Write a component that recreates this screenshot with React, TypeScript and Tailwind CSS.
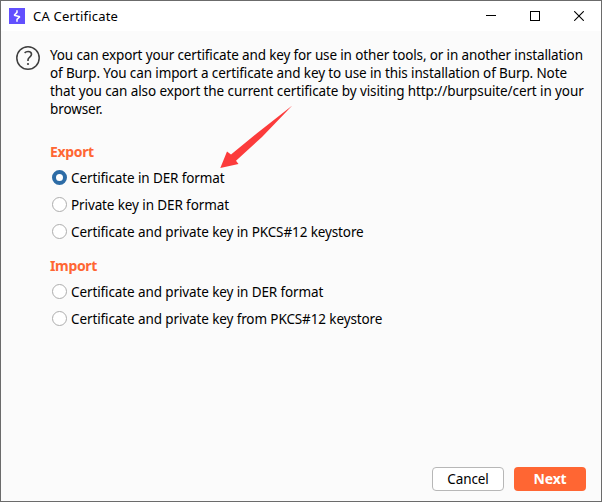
import { useState } from "react";

const description = [
  { text: "You can export your certificate and key for use in other tools, or in another installation", spacing: "tracking-[-0.14px]" },
  { text: "of Burp. You can import a certificate and key to use in this installation of Burp. Note", spacing: "tracking-[-0.12px]" },
  { text: "that you can also export the current certificate by visiting http://burpsuite/cert in your", spacing: "tracking-[-0.1px]" },
  { text: "browser.", spacing: "tracking-[-0.1px]" },
];

const groups = [
  {
    title: "Export",
    options: [
      { id: "export-der-cert", label: "Certificate in DER format" },
      { id: "export-der-key", label: "Private key in DER format" },
      { id: "export-pkcs12", label: "Certificate and private key in PKCS#12 keystore" },
    ],
  },
  {
    title: "Import",
    options: [
      { id: "import-der", label: "Certificate and private key in DER format" },
      { id: "import-pkcs12", label: "Certificate and private key from PKCS#12 keystore" },
    ],
  },
];

function BurpLogo() {
  return (
    <svg width="16" height="16" viewBox="0 0 16 16" className="shrink-0">
      <rect width="16" height="16" fill="#6250fe" />
      <path d="M8 2.2V4.4L5.2 7.2L10.8 8.7L8 11.4V13.7" fill="none" stroke="#fff" strokeWidth="1.5" strokeLinejoin="bevel" />
    </svg>
  );
}

function TitleBar() {
  return (
    <header className="flex h-[30px] shrink-0 items-center bg-white pl-2">
      <BurpLogo />
      <h1 className="ml-2 flex-1 text-[13px] leading-[18px] tracking-[0.2px]">CA Certificate</h1>
      <button aria-label="Minimize" className="flex h-full w-11 items-center justify-center">
        <svg width="10" height="10" viewBox="0 0 10 10" shapeRendering="crispEdges">
          <path d="M0 4.5H10" stroke="#000" />
        </svg>
      </button>
      <button aria-label="Maximize" className="flex h-full w-11 items-center justify-center">
        <svg width="10" height="10" viewBox="0 0 10 10" shapeRendering="crispEdges">
          <rect x="0.5" y="0.5" width="9" height="9" fill="none" stroke="#000" />
        </svg>
      </button>
      <button aria-label="Close" className="flex h-full w-11 items-center justify-center">
        <svg width="10" height="10" viewBox="0 0 10 10">
          <path d="M0.2 0.2L9.8 9.8M9.8 0.2L0.2 9.8" stroke="#000" strokeWidth="1.1" />
        </svg>
      </button>
    </header>
  );
}

function HelpIcon() {
  return (
    <svg width="24" height="24" viewBox="0 0 24 24" fill="none" stroke="#3f3f3f" className="shrink-0">
      <circle cx="12" cy="12" r="11.2" strokeWidth="1.5" />
      <path d="M8.6 6.8C9.6 5.9 10.8 5.5 12.1 5.5C14.2 5.5 15.5 6.6 15.5 8.3C15.5 11 12 11.1 12 13.8V15" strokeWidth="1.6" />
      <circle cx="12" cy="18" r="1.1" fill="#3f3f3f" stroke="none" />
    </svg>
  );
}

export default function App() {
  const [selected, setSelected] = useState("export-der-cert");

  return (
    <div className="relative flex h-[502px] w-[602px] flex-col overflow-hidden border border-[#6b6b6b] bg-[#fbfbfb] font-['Noto_Sans',sans-serif] text-black">
      <TitleBar />

      <main className="flex-1 px-[15px] pt-[15px]">
        <div className="flex gap-[10px]">
          <HelpIcon />
          <div className="text-[13.5px] leading-[18px]">
            {description.map((line) => (
              <p key={line.text} className="whitespace-nowrap">
                <span className={line.spacing}>{line.text}</span>
              </p>
            ))}
          </div>
        </div>

        <div className="ml-[34px] flex flex-col gap-3 pt-[25px]">
          {groups.map((group) => (
            <section key={group.title}>
              <h2 className="mb-[3px] text-[14px] leading-[18px] font-bold tracking-[-0.35px] text-[#ff6633]">{group.title}</h2>
              {group.options.map((option) => {
                const active = selected === option.id;
                return (
                  <label key={option.id} className="flex h-[27px] items-center gap-[4px] pl-[2px]">
                    <input
                      type="radio"
                      name="format"
                      className="sr-only"
                      checked={active}
                      onChange={() => setSelected(option.id)}
                    />
                    <span
                      className={
                        active
                          ? "h-[15px] w-[15px] rounded-full border-[4px] border-[#2d6ca6] bg-white"
                          : "h-[15px] w-[15px] rounded-full border border-[#adadad] bg-white"
                      }
                    />
                    <span className="text-[13.5px] leading-[18px] tracking-[-0.11px] whitespace-nowrap">{option.label}</span>
                  </label>
                );
              })}
            </section>
          ))}
        </div>
      </main>

      <footer className="flex shrink-0 justify-end gap-[10px] pr-[15px] pb-[10px]">
        <button className="h-6 w-[72px] rounded-[4px] border border-[#b7b7b7] bg-white text-[13.5px] leading-[22px] tracking-[-0.12px]">Cancel</button>
        <button className="h-6 w-[72px] rounded-[4px] bg-[#ff6633] text-[14px] leading-6 font-bold tracking-[-0.2px] text-white">Next</button>
      </footer>

      {/* Pointer to the recommended option */}
      <svg width="74" height="64" viewBox="0 0 74 64" className="pointer-events-none absolute top-[103px] left-[218px]">
        <path d="M73.3 1.5L43 33L17 56.7L19.5 60L1.3 64L8 47.5L12 50.5L37 30Z" fill="#fc3b3b" />
      </svg>
    </div>
  );
}
